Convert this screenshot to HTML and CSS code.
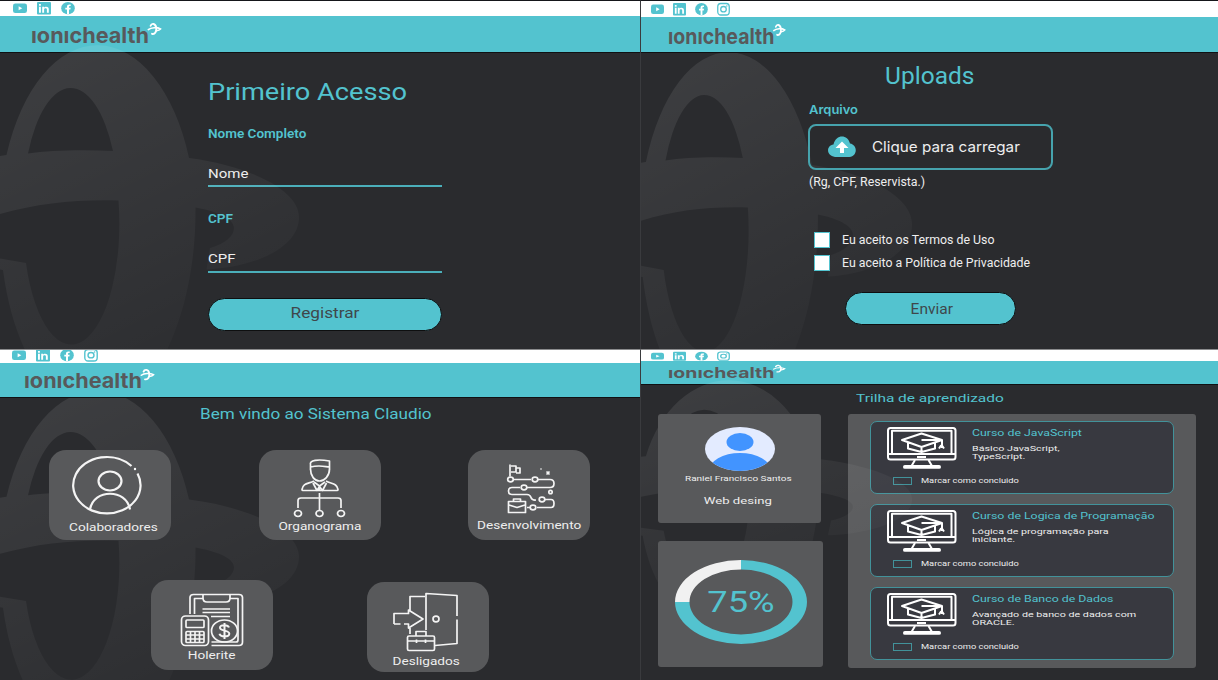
FILE: index.html
```html
<!DOCTYPE html>
<html lang="pt-BR">
<head>
<meta charset="utf-8">
<title>Ionichealth</title>
<link rel="stylesheet" href="styles.css">
</head>
<body>
<svg class="defs" width="0" height="0" aria-hidden="true">
  <defs>
    <linearGradient id="fade" gradientUnits="userSpaceOnUse" x1="40" y1="50" x2="190" y2="350">
      <stop offset="0" stop-color="#fff" stop-opacity=".09"/>
      <stop offset="1" stop-color="#fff" stop-opacity=".015"/>
    </linearGradient>
    <symbol id="mark" viewBox="0 0 300 350" preserveAspectRatio="none">
      <path fill="url(#fade)" fill-rule="evenodd" d="M0 156 6.500 155A98 175 0 0 1 189 158C250 166 299 190 299 217C299 248 255 267 206.500 269.500L210 248C225 244 234 236 234 228C234 218 215 211 195.500 207.500C196 260 186 310 167 350H25C14 326 7 300 3 270L0 269.500V258.500L26 263A48 121 0 0 0 118.500 200.500C75 199.500 40 203 0 214ZM28 153.500A48 120 0 0 1 113 151C80 149.500 50 150.500 28 153.500Z"/>
    </symbol>
    <symbol id="yt" viewBox="0 0 14 14" preserveAspectRatio="none"><rect x="0" y="2.500" width="14" height="9.500" rx="2.300" fill="#53c3cf"/><path d="M5.600 5.300 9.300 7.250 5.600 9.200Z" fill="#fff"/></symbol>
    <symbol id="li" viewBox="0 0 14 14" preserveAspectRatio="none"><rect x="0" y="1" width="14" height="12.500" rx="1" fill="#53c3cf"/><path d="M2 5.800h1.900v5.900H2zM2 3.100h1.900v1.700H2zM5.200 5.800H7v.8c.9-1.400 4.800-1.500 4.800 1.600v3.500H9.900V8.600c0-1.800-2.800-1.700-2.800 0v3.100H5.200z" fill="#fff"/></symbol>
    <symbol id="fb" viewBox="0 0 14 14" preserveAspectRatio="none"><ellipse cx="7" cy="7.200" rx="6.800" ry="6.200" fill="#53c3cf"/><path d="M6 13.500V8.600H4.300V6.800H6V5.600C6 3.800 7.300 3.200 9.700 3.600v1.500C8.400 5 8 5.200 8 6v.8h1.700L9.400 8.600H8v4.900z" fill="#fff"/></symbol>
    <symbol id="ig" viewBox="0 0 14 14" preserveAspectRatio="none"><g fill="none" stroke="#53c3cf" stroke-width="1.400"><rect x=".8" y="1.500" width="12.400" height="11.500" rx="3.300"/><ellipse cx="7" cy="7.200" rx="3" ry="2.700"/></g><circle cx="10.600" cy="4" r=".8" fill="#53c3cf"/></symbol>
    <symbol id="logo" viewBox="0 0 132 24" preserveAspectRatio="none">
      <text class="logo-text" x="0" y="21" textLength="118" lengthAdjust="spacingAndGlyphs">ıonıchealth</text>
      <g fill="none" stroke="#fff" stroke-linecap="round">
        <path d="M119.600 3.800C120.500 1.200 124.500.8 125.300 5.800C125.600 9.500 124 12.600 121 11.800" stroke-width="1.900"/>
        <path d="M117.300 7.600C120 5.300 126 5 129.500 7C128.500 8.200 127 8.600 125.500 8.800" stroke-width="1.600"/>
      </g>
    </symbol>
    <symbol id="course" viewBox="0 0 70 42" preserveAspectRatio="none">
      <g fill="none" stroke="#fff" stroke-width="2" stroke-linejoin="round">
        <rect x="1" y="1" width="67.500" height="31.500" rx="2.500"/>
        <path d="M5 27V3.800H64.500V27M1 27h67.500M30 30h9M28 33l-3.500 6M41.500 33l3.500 6"/>
        <rect x="17" y="39" width="36" height="1.800" rx=".9"/>
        <path d="M15 13 34.500 6.500 55 13 34.500 20ZM21 16v5.500L34.500 25 48 21.500V16M34.500 20v4M34.500 13H55v8M52 21.500l2-3h1l2 3"/>
      </g>
    </symbol>
  </defs>
</svg>

<main class="board">
  <section class="screen first">
    <svg class="watermark"><use href="#mark"/></svg>
    <nav class="social">
      <svg><use href="#yt"/></svg><svg><use href="#li"/></svg><svg><use href="#fb"/></svg>
    </nav>
    <header class="brand"><svg class="logo"><use href="#logo"/></svg></header>
    <form class="access">
      <h1 class="title"><span class="w">Primeiro Acesso</span></h1>
      <label class="label"><span class="w">Nome Completo</span></label>
      <div class="field"><span class="w">Nome</span></div>
      <label class="label second"><span class="w">CPF</span></label>
      <div class="field"><span class="w">CPF</span></div>
      <button type="button" class="pill"><span class="w">Registrar</span></button>
    </form>
  </section>

  <section class="screen upload">
    <svg class="watermark"><use href="#mark"/></svg>
    <nav class="social">
      <svg><use href="#yt"/></svg><svg><use href="#li"/></svg><svg><use href="#fb"/></svg><svg><use href="#ig"/></svg>
    </nav>
    <header class="brand"><svg class="logo"><use href="#logo"/></svg></header>
    <form class="send">
      <h1 class="title"><span class="w">Uploads</span></h1>
      <label class="file-label"><span class="w">Arquivo</span></label>
      <div class="drop">
        <svg class="cloud" viewBox="0 0 28 22"><path d="M7 21C-2 20-2 9.500 5.500 8.500C8-2.500 20-1.500 22 7.500C30 9 29.500 20 21.500 21Z" fill="#53c3cf"/><path d="M14 5.500 20.500 12H16v5h-4v-5H7.500Z" fill="#fff"/></svg>
        <span class="w">Clique para carregar</span>
      </div>
      <p class="hint"><span class="w">(Rg, CPF, Reservista.)</span></p>
      <div class="check"><i></i><span class="w">Eu aceito os Termos de Uso</span></div>
      <div class="check"><i></i><span class="w">Eu aceito a Política de Privacidade</span></div>
      <button type="button" class="pill"><span class="w">Enviar</span></button>
    </form>
  </section>

  <section class="screen home">
    <svg class="watermark"><use href="#mark"/></svg>
    <nav class="social">
      <svg><use href="#yt"/></svg><svg><use href="#li"/></svg><svg><use href="#fb"/></svg><svg><use href="#ig"/></svg>
    </nav>
    <header class="brand"><svg class="logo"><use href="#logo"/></svg></header>
    <h1 class="welcome"><span class="w">Bem vindo ao Sistema Claudio</span></h1>
    <div class="tiles">
      <a class="tile people">
        <svg viewBox="0 0 122 90"><g class="line thick"><path d="M82.500 16A33.700 28.200 0 1 0 88.500 23.500"/><ellipse cx="61" cy="31" rx="11.500" ry="9.500"/><path d="M41 59.500C44.500 38.500 77.500 38.500 81 59.500"/></g><circle cx="86" cy="19" r="1.200" fill="#fff"/></svg>
        <span class="w">Colaboradores</span>
      </a>
      <a class="tile org">
        <svg viewBox="0 0 122 90"><g class="line"><path d="M51.500 20v-5C50 10 59 9 70.500 11v9M51.500 17c8-2 11-1 19 0M51.500 19c0 7 4 12 9 12s10-5 10-12M55 31c-6 3-11 2-12 8.500q0 1 1 1h34q1 0 1-1c-1-6.500-7-5.500-12-8.500M55 32l5.500 4 5.500-4M54 33l4 7.500 2.500-4 3 4 4-7.500M60.500 37v4M60.500 43v17M39 58V50.500q0-2.500 3-2.500H79q3 0 3 2.500V58"/><ellipse cx="39" cy="63.500" rx="3.500" ry="3"/><ellipse cx="60.500" cy="63.500" rx="3.500" ry="3"/><ellipse cx="82" cy="63.500" rx="3.500" ry="3"/></g></svg>
        <span class="w">Organograma</span>
      </a>
      <a class="tile dev">
        <svg viewBox="0 0 122 90"><g class="line"><path d="M42 26.500V14.500M43 16h5v6h-5M48 18h4v5h-4M45 29.500h18M70 29.500h12q4 0 4 4t-4 4H59M52 37.500H44q-3.500 0-3.500 3.500t3.500 3.500H59q3 0 4 3t5 2.500M77 49.500h6q3 0 3 4t-3 4H69M62 57.500h-3"/><ellipse cx="42.500" cy="29.500" rx="2.800" ry="2.300"/><ellipse cx="67" cy="29.500" rx="2.800" ry="2.300"/><ellipse cx="56" cy="37.500" rx="2.800" ry="2.300"/><ellipse cx="74" cy="49.500" rx="2.800" ry="2.300"/><ellipse cx="65" cy="57.500" rx="2.800" ry="2.300"/><circle cx="82.500" cy="42" r="1.700"/><rect x="40.500" y="51.500" width="17" height="11"/><path d="M45.500 51v-2h7v2M41 55l8 2.500 8-2.500M78.500 21.500l3 3M81.500 21.500l-3 3"/></g><circle cx="73" cy="19" r=".8" fill="#fff"/></svg>
        <span class="w">Desenvolvimento</span>
      </a>
      <a class="tile pay">
        <svg viewBox="0 0 122 90"><g class="line"><path d="M39 34V17.500q0-3 3.500-3H88q3.500 0 3.500 3V62q0 3.500-3.500 3.500H60.500M43.500 34V18.500H52M79 18.500h8V60q0 2-2 2H60.500M52 15v3q0 4 4 4H75q4 0 4-4v-3M51.500 29h27.500M51.500 32.500h27.500M60 36.500h19"/><rect x="30.500" y="36" width="27" height="29.500" rx="4"/><rect x="35" y="40" width="18" height="7.500" rx="1"/><rect x="35" y="51.500" width="18" height="11" rx="1"/><path d="M39.500 51.500v11M44 51.500v11M48.500 51.500v11M35 55h18M35 59h18"/><ellipse cx="73.500" cy="51" rx="13" ry="11"/><path stroke-width="2" d="M78 47.500c-1-3-9-3-9 .2 0 3.500 9.300 2.300 9.300 6 0 3.500-9 3.500-9.800 0M73.500 43v16"/></g></svg>
        <span class="w">Holerite</span>
      </a>
      <a class="tile leave">
        <svg viewBox="0 0 122 90"><g class="line"><path d="M59 48V11.500L90 13.500V34M90 37.500V61.500L68 63.500M58 14.500H43V29M43 46v6M27 42V31.500H41.500V28L56 37 41.500 46V42H37M33.500 42H27"/><ellipse cx="69" cy="37" rx="3" ry="2.800"/><rect x="40.500" y="54" width="27" height="14.500" rx="1.500"/><path d="M49 54v-4.500h10V54M41 59h27M49.500 57.500v3.500M58.500 57.500v3.500"/></g></svg>
        <span class="w">Desligados</span>
      </a>
    </div>
  </section>

  <section class="screen learn">
    <svg class="watermark"><use href="#mark"/></svg>
    <nav class="social">
      <svg><use href="#yt"/></svg><svg><use href="#li"/></svg><svg><use href="#fb"/></svg><svg><use href="#ig"/></svg>
    </nav>
    <header class="brand"><svg class="logo"><use href="#logo"/></svg></header>
    <h1 class="track-title"><span class="w">Trilha de aprendizado</span></h1>
    <div class="columns">
      <aside class="side">
        <div class="profile">
          <svg class="avatar" viewBox="0 0 70 44"><defs><clipPath id="face"><ellipse cx="35" cy="22" rx="35" ry="22"/></clipPath></defs><g clip-path="url(#face)"><rect width="70" height="44" fill="#e3ebff"/><ellipse cx="35" cy="15" rx="13.500" ry="9" fill="#4294ff"/><ellipse cx="35" cy="44" rx="31" ry="18" fill="#4294ff"/></g></svg>
          <p class="name"><span class="w">Raniel Francisco Santos</span></p>
          <p class="role"><span class="w">Web desing</span></p>
        </div>
        <div class="progress">
          <svg viewBox="0 0 132 84" class="ring"><path fill="#f1f1f1" d="M0 42A66 42 0 0 1 66 0V9.500A51.500 32.500 0 0 0 14.500 42Z"/><path fill="#53c3cf" d="M66 0A66 42 0 1 1 0 42H14.500A51.500 32.500 0 1 0 66 9.500Z"/></svg>
          <span class="percent"><span class="w">75%</span></span>
        </div>
      </aside>
      <div class="courses">
        <article class="course">
          <svg class="monitor"><use href="#course"/></svg>
          <div class="info"><h2><span class="w">Curso de JavaScript</span></h2><p><span class="w">Básico JavaScript,<br>TypeScript.</span></p></div>
          <div class="done"><i></i><span class="w">Marcar como concluido</span></div>
        </article>
        <article class="course">
          <svg class="monitor"><use href="#course"/></svg>
          <div class="info"><h2><span class="w">Curso de Logica de Programação</span></h2><p><span class="w">Lógica de programação para<br>iniciante.</span></p></div>
          <div class="done"><i></i><span class="w">Marcar como concluido</span></div>
        </article>
        <article class="course">
          <svg class="monitor"><use href="#course"/></svg>
          <div class="info"><h2><span class="w">Curso de Banco de Dados</span></h2><p><span class="w">Avançado de banco de dados com<br>ORACLE.</span></p></div>
          <div class="done"><i></i><span class="w">Marcar como concluido</span></div>
        </article>
      </div>
    </div>
  </section>
</main>
</body>
</html>
```

FILE: styles.css
```css
* { box-sizing: border-box; }
body { margin: 0; background: #2a2b2e; font-family: Roboto, "Liberation Sans", sans-serif; color: #eee; }
h1, h2, p { margin: 0; font-weight: 400; }
.defs { position: absolute; }
.board { display: grid; grid-template-columns: 640px 578px; grid-template-rows: 349px 331px; width: 1218px; height: 680px; overflow: hidden; }
.screen { --sx: 1.11; position: relative; overflow: hidden; display: flex; flex-direction: column; background: #2a2b2e; border-top: 1px solid #15161a; }
.w { display: inline-block; white-space: nowrap; transform: scaleX(var(--sx)); transform-origin: 0 50%; }
.watermark { position: absolute; left: 0; top: -1px; width: 300px; height: 350px; pointer-events: none; z-index: 1; }

.social { display: flex; flex: none; align-items: center; height: 15px; padding: 0 0 1px 13px; gap: 10px; background: #fff; }
.social svg { width: 14px; height: 14px; flex: none; }
.brand { flex: none; height: 37px; padding: 6px 0 0 31px; background: #53c3cf; border-bottom: 1px solid #101113; }
.logo { display: block; width: 132px; height: 24px; overflow: visible; }
.logo-text { font: 700 21.5px Inter, sans-serif; fill: #58595b; }

.title { color: #53c3cf; font-size: 24.5px; line-height: 30px; }
.pill { border: 1px solid #0e0f10; border-radius: 17px; background: #53c3cf; color: #3f474b; font-family: inherit; padding: 0; display: block; text-align: center; }
.pill .w { transform-origin: 50% 50%; }

.access { width: 234px; margin: 24px 0 0 208px; }
.label { display: block; margin-top: 19px; font-size: 12.2px; font-weight: 600; line-height: 16px; color: #53c3cf; }
.label.second { margin-top: 24px; }
.field { margin-top: 19px; height: 26px; font-size: 13.5px; line-height: 25px; border-bottom: 2px solid #4bafba; }
.label.second + .field { margin-top: 19px; height: 27px; }
.access .pill { margin-top: 25px; width: 234px; height: 33px; font-size: 15.5px; line-height: 29px; padding-bottom: 2px; }

.upload { --sx: 1.02; border-left: 1px solid #3a3b3e; }
.upload .watermark { left: -1px; top: 6px; width: 273px; z-index: 0; }
.upload .social, .upload .brand, .send { z-index: 1; }
.upload .social { height: 16px; padding-left: 10px; gap: 9px; }
.upload .social svg, .learn .social svg { width: 13px; }
.upload .brand { height: 36px; padding-left: 27px; }
.upload .logo, .learn .logo { width: 119px; }
.send { width: 245px; margin: 8px 0 0 167px; }
.send .title { text-align: center; padding-right: 2px; font-size: 24px; }
.send .title .w { transform-origin: 50% 50%; }
.file-label { display: block; margin-top: 11px; font: 600 12px/16px Inter, sans-serif; color: #53c3cf; padding-left: 1px; }
.file-label .w { transform: scaleX(1.08); }
.drop { display: flex; align-items: center; height: 46px; margin-top: 6px; padding-left: 18px; gap: 16px; border: 2px solid #46a3ad; border-radius: 8px; font: 400 14.5px/20px Inter, sans-serif; }
.drop .w { transform: scaleX(1.05); }
.cloud { width: 28px; height: 22px; }
.hint { margin-top: 4px; padding-left: 1px; font-size: 12px; line-height: 16px; }
.hint .w { transform: scaleX(1.03); }
.check { display: flex; align-items: center; height: 23px; padding-left: 6px; gap: 12px; font-size: 12.1px; }
.hint + .check { margin-top: 38px; }
.check i { width: 16px; height: 16px; background: #fff; border: 1.500px solid #53c3cf; }
.send .pill { width: 171px; height: 33px; margin: 18px 0 0 37px; font-size: 15.2px; padding-left: 2px; }

.home { --sx: 1.155; border-top-color: #8a8b8d; }
.home .watermark { top: -3px; height: 338px; z-index: 0; }
.home .social { height: 13px; padding: 0 0 0 12px; z-index: 1; }
.home .social svg { transform: translateY(-2px); }
.home .social, .learn .social { overflow: hidden; }
.home .brand { height: 35px; padding: 5px 0 0 24px; z-index: 1; }
.home .logo { height: 23px; }
.welcome { margin-top: 7px; padding-left: 200px; font-size: 14.8px; line-height: 18px; color: #53c3cf; }
.tiles { display: grid; z-index: 1; padding-top: 27px; height: 255px; grid-template: 90px 90px / 49px 102px 108px 108px 101px 172px; row-gap: 40px; }
.tile { width: 122px; height: 90px; border-radius: 17px; background: #58595b; display: grid; }
.tile svg { grid-area: 1 / 1; width: 122px; height: 90px; }
.tile .w { grid-area: 1 / 1; align-self: end; justify-self: center; transform-origin: 50% 50%; font-size: 11.800px; line-height: 16px; margin-bottom: 6px; }
.people { grid-area: 1 / 2; }
.org { grid-area: 1 / 4; }
.dev { grid-area: 1 / 6; }
.pay { grid-area: 2 / 3; }
.leave { grid-area: 2 / 5; margin-top: 2px; }
.tile.people .w { margin: 0 0 5px 6px; }
.tile.dev .w { margin-bottom: 7px; }
.tile.pay .w { margin-bottom: 7px; }
.tile.leave .w { margin: 0 4px 3px 0; }
.line { fill: none; stroke: #f4f4f4; stroke-width: 1.700; stroke-linejoin: round; }
.line.thick { stroke-width: 2.200; }

.learn { --sx: 1.43; border-top-color: #8a8b8d; border-left: 1px solid #3a3b3e; }
.learn .watermark { left: -1px; top: -1px; width: 273px; height: 242px; }
.learn .social { height: 11px; padding: 0 0 0 10px; gap: 9px; }
.learn .social svg { height: 10px; }
.learn .brand { height: 24px; padding: 3px 0 0 27px; }
.learn .logo { height: 16px; }
.track-title { margin-top: 6px; padding-left: 215px; font-size: 11.200px; line-height: 16px; color: #53c3cf; }
.track-title .w { transform: scaleX(1.38); }
.columns { display: flex; justify-content: space-between; align-items: flex-start; padding: 7px 22px 0 17px; }
.side { position: relative; z-index: 2; display: flex; flex-direction: column; gap: 18px; width: 166px; }
.profile { width: 163px; height: 109px; padding-top: 13px; border-radius: 3px; background: #58595b; text-align: center; }
.avatar { display: block; width: 70px; height: 44px; margin: 0 auto; }
.profile .w { transform-origin: 50% 50%; }
.name { font-size: 7px; line-height: 10px; margin-top: 3px; padding-right: 2px; }
.role { font-size: 9.200px; line-height: 12px; margin-top: 11px; padding-right: 3px; }
.progress { display: grid; place-items: center; width: 165px; height: 126px; padding-bottom: 5px; border-radius: 3px; background: #58595b; }
.ring { grid-area: 1 / 1; width: 132px; height: 84px; }
.percent { grid-area: 1 / 1; font-size: 29px; line-height: 32px; color: #53c3cf; padding-top: 1px; }
.percent .w { transform: scaleX(1.25); transform-origin: 50% 50%; }
.courses { display: flex; flex-direction: column; gap: 10px; width: 348px; height: 254px; padding: 7px 0 0 22px; border-radius: 3px; background: #58595b; }
.course { display: grid; grid-template: 52px 1fr / 86px 1fr; width: 304px; height: 73px; padding-left: 15px; border: 1px solid #42929a; border-radius: 7px; background: #383940; }
.monitor { width: 70px; height: 42px; margin: 5px 0 0 1px; }
.info { padding-top: 5px; }
.info h2 { font-size: 8.500px; line-height: 12px; color: #53c3cf; }
.info h2 .w { transform: scaleX(1.45); }
.info p { margin-top: 6px; font-size: 7.500px; line-height: 8px; }
.done { grid-column: 1 / 3; display: flex; align-items: center; height: 13px; padding-left: 7px; gap: 9px; font-size: 6.500px; }
.done i { width: 19px; height: 8px; border: 1px solid #42929a; }
```
